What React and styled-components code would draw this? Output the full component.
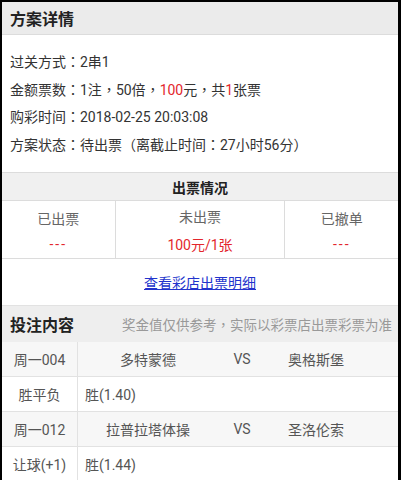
import styled, { createGlobalStyle } from 'styled-components'

const Global = createGlobalStyle`
  html, body {
    margin: 0;
    padding: 0;
    background: #000;
  }
  body {
    font-family: Roboto, "Noto Sans CJK SC", sans-serif;
    color: #333;
  }
`

const Frame = styled.div`
  box-sizing: border-box;
  width: 401px;
  height: 480px;
  overflow: hidden;
  border-top: 2px solid #000;
  border-left: 2px solid #000;
  border-right: 3px solid #000;
  background: #fff;
`

const TitleBar = styled.div`
  height: 32px;
  display: flex;
  align-items: center;
  padding: 0 8px;
  background: #ebebeb;
  border-bottom: 1px solid #dcdcdc;
  font-size: 16px;
  font-weight: bold;
  color: #222;
`

const InfoBlock = styled.div`
  padding: 14px 8px 13px;
`

const InfoLine = styled.div`
  height: 27.5px;
  font-size: 14px;
  line-height: 27.5px;
  color: #333;
  white-space: nowrap;
`

// full-width punctuation sits centred in its box on the device font
const Punct = styled.span`
  font-family: "Noto Sans CJK TC", sans-serif;
  line-height: 1;
`

const Red = styled.span`
  color: #e3262c;
`

const SubHead = styled.div`
  height: 27px;
  display: flex;
  align-items: center;
  justify-content: center;
  background: #f0f0f0;
  border-top: 1px solid #dcdcdc;
  border-bottom: 1px solid #dcdcdc;
  font-size: 14px;
  font-weight: bold;
  color: #222;
`

const Stats = styled.div`
  display: flex;
  height: 57px;
  border-bottom: 1px solid #dcdcdc;
`

const Stat = styled.div`
  flex: ${p => p.$grow};
  display: flex;
  flex-direction: column;
  align-items: center;
  justify-content: center;
  gap: 8px;
  & + & {
    border-left: 1px solid #dcdcdc;
  }
`

const StatLabel = styled.div`
  font-size: 14px;
  color: #666;
`

const StatValue = styled.div`
  font-size: 14px;
  color: #e3262c;
  letter-spacing: ${p => (p.$dash ? '2px' : '0')};
`

const LinkRow = styled.div`
  height: 46px;
  display: flex;
  align-items: center;
  justify-content: center;
`

const DetailLink = styled.a`
  font-size: 14px;
  color: #2233cc;
  text-decoration: underline;
`

const SectionBar = styled.div`
  height: 36px;
  display: flex;
  align-items: center;
  justify-content: space-between;
  padding: 0 6px 0 8px;
  background: #eeeeee;
  border-top: 1px solid #e2e2e2;
`

const SectionTitle = styled.div`
  font-size: 16px;
  font-weight: bold;
  color: #222;
`

const Note = styled.div`
  font-size: 13.5px;
  color: #999;
  white-space: nowrap;
`

const Row = styled.div`
  display: flex;
  height: 34px;
  border-bottom: 1px solid #e2e2e2;
  background: ${p => (p.$match ? '#f7f7f7' : '#fff')};
  font-size: 14px;
  color: #555;
`

const KeyCell = styled.div`
  flex: 0 0 75px;
  display: flex;
  align-items: center;
  justify-content: center;
  border-right: 1px solid #e2e2e2;
`

const Team = styled.div`
  flex: 0 0 ${p => p.$w}px;
  display: flex;
  align-items: center;
  justify-content: center;
`

const Versus = styled.div`
  flex: 0 0 48px;
  display: flex;
  align-items: center;
  justify-content: center;
`

const Pick = styled.div`
  display: flex;
  align-items: center;
  padding-left: 7px;
`

const matches = [
  { no: '周一004', home: '多特蒙德', away: '奥格斯堡', play: '胜平负', pick: '胜(1.40)' },
  { no: '周一012', home: '拉普拉塔体操', away: '圣洛伦索', play: '让球(+1)', pick: '胜(1.44)' },
]

export default function App() {
  return (
    <Frame>
      <Global />
      <TitleBar>方案详情</TitleBar>
      <InfoBlock>
        <InfoLine>过关方式<Punct>：</Punct>2串1</InfoLine>
        <InfoLine>
          金额票数<Punct>：</Punct>1注<Punct>，</Punct>50倍<Punct>，</Punct>
          <Red>100</Red>元<Punct>，</Punct>共<Red>1</Red>张票
        </InfoLine>
        <InfoLine>购彩时间<Punct>：</Punct>2018-02-25 20:03:08</InfoLine>
        <InfoLine>
          方案状态<Punct>：</Punct>待出票<Punct>（</Punct>离截止时间<Punct>：</Punct>27小时56分<Punct>）</Punct>
        </InfoLine>
      </InfoBlock>
      <SubHead>出票情况</SubHead>
      <Stats>
        <Stat $grow={2}>
          <StatLabel>已出票</StatLabel>
          <StatValue $dash>---</StatValue>
        </Stat>
        <Stat $grow={3}>
          <StatLabel>未出票</StatLabel>
          <StatValue>100元/1张</StatValue>
        </Stat>
        <Stat $grow={2}>
          <StatLabel>已撤单</StatLabel>
          <StatValue $dash>---</StatValue>
        </Stat>
      </Stats>
      <LinkRow>
        <DetailLink href="#">查看彩店出票明细</DetailLink>
      </LinkRow>
      <SectionBar>
        <SectionTitle>投注内容</SectionTitle>
        <Note>奖金值仅供参考<Punct>，</Punct>实际以彩票店出票彩票为准</Note>
      </SectionBar>
      {matches.map(m => (
        <div key={m.no}>
          <Row $match>
            <KeyCell>{m.no}</KeyCell>
            <Team $w={140}>{m.home}</Team>
            <Versus>VS</Versus>
            <Team $w={100}>{m.away}</Team>
          </Row>
          <Row>
            <KeyCell>{m.play}</KeyCell>
            <Pick>{m.pick}</Pick>
          </Row>
        </div>
      ))}
    </Frame>
  )
}
